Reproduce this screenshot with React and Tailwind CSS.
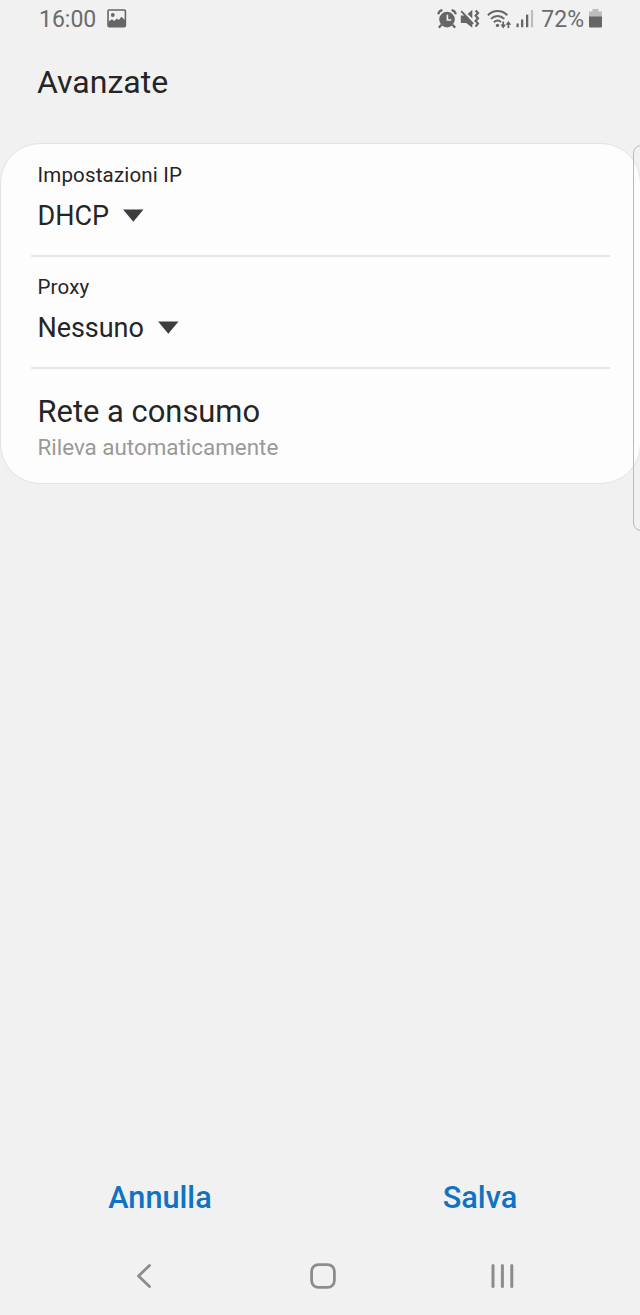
import React from "react";

const PictureIcon = () => (
  <svg width="20" height="19" viewBox="0 0 20 19" fill="none">
    <rect x="1" y="1" width="17.4" height="16.6" rx="1" stroke="#666" strokeWidth="1.6" />
    <circle cx="5.8" cy="6" r="1.9" fill="#666" />
    <path d="M1.5 12.4 5 10.2l2.2 1.8 2.6-2.6 2 1.6 2.6-3.2 4 3.8v6h-17z" fill="#666" />
  </svg>
);

const AlarmIcon = () => (
  <svg width="20" height="20" viewBox="0 0 20 20" fill="none">
    <circle cx="10" cy="10.6" r="7.8" fill="#666" />
    <path d="M1.2 5.2C1.7 3.2 3.3 1.6 5.4 1.2M14.6 1.2c2.1.4 3.7 2 4.2 4" stroke="#666" strokeWidth="2.2" />
    <path d="m4.6 15.8-2.8 2.8M15.4 15.8l2.8 2.8" stroke="#666" strokeWidth="2.2" />
    <path d="M10.4 5.8v5.2h3.8" stroke="#f1f1f1" strokeWidth="1.6" />
  </svg>
);

const MuteVibrateIcon = () => (
  <svg width="20" height="20" viewBox="0 0 20 20" fill="none">
    <path d="M.8 6.4h4l7.5 7.6v4.8L6.2 14H.8z" fill="#666" />
    <path d="M7.6 5 12.3.8V9.6z" fill="#666" />
    <path d="m1.2 2.2 12 12.6" stroke="#666" strokeWidth="1.9" />
    <path d="m15.6 1.6 2.4 2.5-2.4 2.6 2.4 2.6-2.4 2.6 2.4 2.6-2.4 3.2" stroke="#666" strokeWidth="2.2" />
  </svg>
);

const WifiIcon = () => (
  <svg width="26" height="20" viewBox="0 0 26 20" fill="none">
    <path d="M.9 6.2c5.6-5.6 13.8-5.6 19.4 0" stroke="#666" strokeWidth="2" />
    <path d="M3.9 9.9c4-3.9 9.5-3.9 13.4 0" stroke="#666" strokeWidth="2" />
    <path d="M6.9 13.3c2.3-2.2 4.9-2.2 7.2-.2" stroke="#666" strokeWidth="1.9" />
    <circle cx="10.5" cy="16.4" r="1.7" fill="#666" />
    <path d="M16.2 12.6v5M21.4 19v-5" stroke="#666" strokeWidth="1.7" />
    <path d="M13.4 15.6h5.6l-2.8 3.8zM18.6 15.8h5.6l-2.8-3.8z" fill="#666" />
  </svg>
);

const SignalIcon = () => (
  <svg width="18" height="20" viewBox="0 0 18 20" fill="#666">
    <rect x=".5" y="14.5" width="2.2" height="3.7" />
    <rect x="5" y="10.5" width="2.3" height="7.7" />
    <rect x="10" y="5.6" width="2.3" height="12.6" />
    <rect x="14.9" y="1" width="2.2" height="17.2" fill="#bdbdbd" />
  </svg>
);

const BatteryIcon = () => (
  <svg width="13" height="20" viewBox="0 0 13 20">
    <path d="M3.5 0h6v2.6H13v6H0v-6h3.5z" fill="#bdbdbd" />
    <path d="M0 7.4h13v10.2a1 1 0 0 1-1 1H1a1 1 0 0 1-1-1z" fill="#666" />
  </svg>
);

const Dropdown = ({ label, value }) => (
  <div className="ml-[30px] mr-[30px] h-28 border-b-2 border-[#e6e6e6] pl-[6.5px] pt-[17px]">
    <p className="text-[20.5px] leading-[26px] tracking-[0.17px]">{label}</p>
    <div className="mt-2.5 flex items-center gap-[14px]">
      <span className="pt-0.5 text-[27px] leading-8 tracking-[-0.05px]">{value}</span>
      <svg width="21" height="13" viewBox="0 0 21 13" fill="#3d3d3d">
        <path d="M.1.5h20.4L10.3 12.7z" />
      </svg>
    </div>
  </div>
);

const App = () => {
  return (
    <div className="relative flex h-[1315px] w-[640px] flex-col overflow-hidden bg-[#f1f1f1] font-['Roboto',sans-serif] text-[#252525]">
      {/* Status bar */}
      <div className="flex h-[38px] items-center pl-[39px] pr-[38px] text-[#6b6b6b]">
        <span className="mr-[11px] pt-0.5 text-[23px] leading-7">16:00</span>
        <span className="pb-0.5"><PictureIcon /></span>
        <div className="ml-auto flex items-center">
          <span className="pb-px"><AlarmIcon /></span>
          <span className="ml-[3px] pb-px"><MuteVibrateIcon /></span>
          <span className="ml-[7px] pb-px"><WifiIcon /></span>
          <span className="ml-[3px]"><SignalIcon /></span>
          <span className="ml-[7px] pt-0.5 text-[23px] leading-7">72%</span>
          <span className="ml-[5px]"><BatteryIcon /></span>
        </div>
      </div>

      <h1 className="mt-[24px] pl-[37px] text-[32px] leading-10">Avanzate</h1>

      {/* Settings card */}
      <div className="-mr-px mt-[41px] h-[341px] rounded-[40px] border border-[#e3e3e3] bg-[#fdfdfd] pt-px">
        <Dropdown label="Impostazioni IP" value="DHCP" />
        <Dropdown label="Proxy" value="Nessuno" />
        <div className="pl-[36.5px] pt-[23px]">
          <p className="text-[30.9px] leading-10">Rete a consumo</p>
          <p className="-mt-px text-[22.4px] leading-8 text-[#999]">Rileva automaticamente</p>
        </div>
      </div>

      {/* Edge panel handle */}
      <div className="absolute left-[633px] top-[145px] h-[386px] w-5 rounded-lg border border-[#b9b9b9]" />

      {/* Actions */}
      <div className="mt-auto grid grid-cols-2 text-center text-[30.7px] font-medium leading-10 text-[#0f73c4]">
        <button>Annulla</button>
        <button>Salva</button>
      </div>

      {/* Navigation bar */}
      <div className="mt-[19px] flex h-[78px] items-center pl-[136px]">
        <svg width="16" height="26" viewBox="0 0 16 26" fill="none" stroke="#8c8c8c" strokeWidth="2.8" strokeLinecap="round" strokeLinejoin="round">
          <path d="M13.5 2.5 2.5 13l11 10.5" />
        </svg>
        <svg className="ml-[158px]" width="26" height="26" viewBox="0 0 26 26" fill="none" stroke="#8c8c8c" strokeWidth="2.8">
          <rect x="1.6" y="1.6" width="22.8" height="22.8" rx="6.8" />
        </svg>
        <svg className="ml-[154px]" width="26" height="26" viewBox="0 0 26 26" stroke="#8c8c8c" strokeWidth="3" strokeLinecap="round">
          <path d="M3 2.5v21M12.4 2.5v21M21.8 2.5v21" />
        </svg>
      </div>
    </div>
  );
};

export default App;
